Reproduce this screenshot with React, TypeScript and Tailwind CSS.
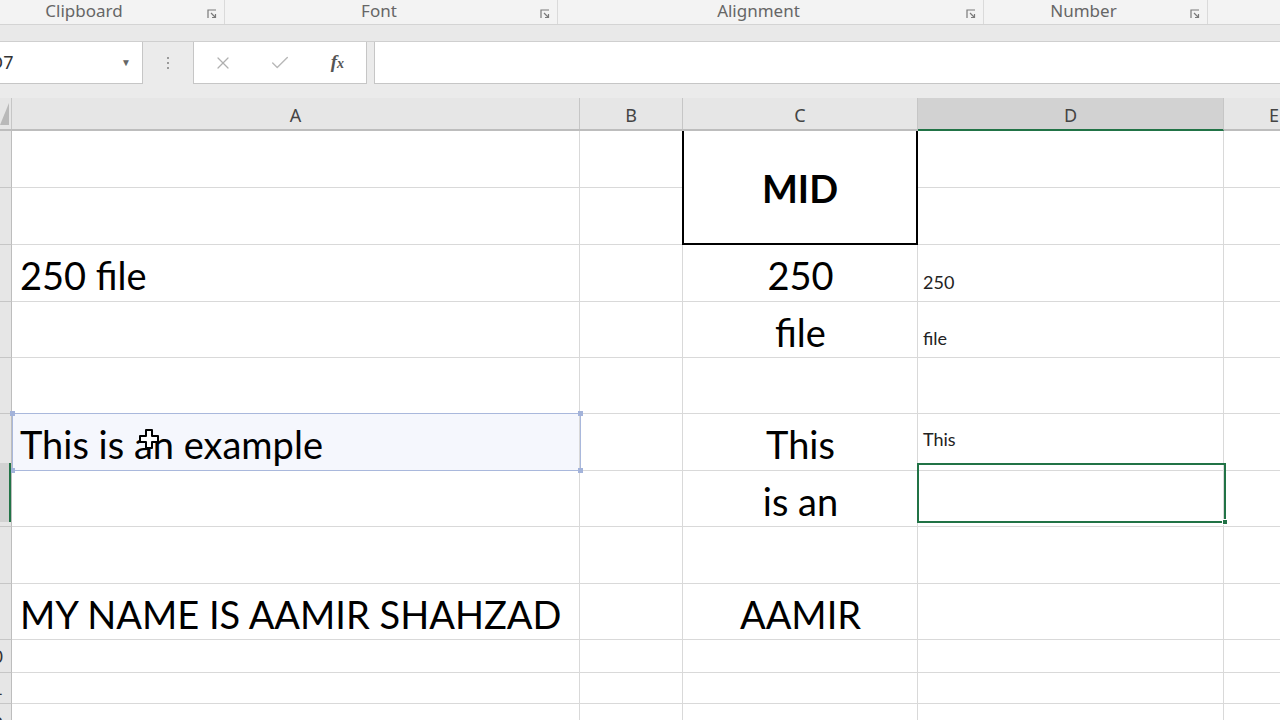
import { Check, X } from "lucide-react";

const GRID = "#d9d9d9";
const big = "text-[38px] leading-none text-black whitespace-nowrap";
const small = "text-[18px] leading-none text-[#222] whitespace-nowrap";

const rowHeights = [57, 57, 57, 56, 56, 57, 56, 57, 56, 33, 31, 40];

/** Small dialog-launcher glyph in the corner of each ribbon group */
function Launcher() {
	return (
		<svg width="10" height="10" viewBox="0 0 10 10" className="text-[#7a7a7a]">
			<path d="M1 9V1h8" fill="none" stroke="currentColor" strokeWidth="1.2" />
			<path d="M4 4l4.5 4.5M8.5 5v3.5H5" fill="none" stroke="currentColor" strokeWidth="1.2" />
		</svg>
	);
}

function RibbonGroup(props: { label: string; width: number; className?: string }) {
	return (
		<div
			className={`flex items-center h-full border-r border-[#dadada] ${props.className ?? ""}`}
			style={{ width: props.width }}
		>
			<div className="flex-1 text-center text-[17px] text-[#666] pb-[2px]">{props.label}</div>
			<div className="w-[24px] flex justify-center pt-[3px]">
				<Launcher />
			</div>
		</div>
	);
}

function MoveCursor() {
	return (
		<svg width="22" height="22" viewBox="0 0 22 22" className="absolute left-[138px] top-[428px]">
			<path
				d="M8 2h6v6h6v6h-6v6H8v-6H2V8h6z"
				fill="white"
				stroke="black"
				strokeWidth="2"
				strokeLinejoin="round"
			/>
		</svg>
	);
}

export default function App() {
	return (
		<div className="relative w-[1280px] h-[720px] overflow-hidden bg-white font-['Lato',sans-serif]">
			{/* Ribbon group labels */}
			<div className="flex h-[25px] bg-[#f3f3f3] border-b border-[#d4d4d4] font-['Noto_Sans',sans-serif]">
				<RibbonGroup label="Clipboard" width={257} className="ml-[-32px]" />
				<RibbonGroup label="Font" width={333} />
				<RibbonGroup label="Alignment" width={426} />
				<RibbonGroup label="Number" width={224} />
			</div>
			<div className="h-[17px] bg-[#e9e9e9] border-b border-[#cfcfcf]" />

			{/* Formula bar */}
			<div className="h-[56px] bg-[#ebebeb]">
				<div className="flex h-[42px]">
					<div className="ml-[-2px] w-[145px] flex items-center bg-white border border-t-0 border-[#c6c6c6] font-['Noto_Sans',sans-serif]">
						<span className="ml-[-9px] text-[18px] text-[#333]">D7</span>
						<span className="ml-auto mr-[11px] text-[10px] text-[#666]">▼</span>
					</div>
					<div className="w-[50px] flex flex-col items-center justify-center gap-[3px]">
						<span className="w-[2px] h-[2px] bg-[#9a9a9a]" />
						<span className="w-[2px] h-[2px] bg-[#9a9a9a]" />
						<span className="w-[2px] h-[2px] bg-[#9a9a9a]" />
					</div>
					<div className="w-[174px] grid grid-cols-3 items-center bg-white border border-t-0 border-[#c6c6c6]">
						<X className="justify-self-center w-[20px] h-[20px] text-[#b0b0b0]" strokeWidth={1.5} />
						<Check className="justify-self-center w-[22px] h-[22px] text-[#b8b8b8]" strokeWidth={1.5} />
						<span className="justify-self-center font-['Liberation_Serif',serif] italic font-bold text-[19px] text-[#555]">
							f<span className="text-[14px]">x</span>
						</span>
					</div>
					<div className="ml-[7px] flex-1 bg-white border-b border-l border-[#c6c6c6]" />
				</div>
			</div>

			{/* Column headers */}
			<div className="grid grid-cols-[12px_568px_103px_235px_306px_100px] h-[33px] bg-[#e6e6e6] border-b-2 border-[#bdbdbd] text-[18px] text-[#444] font-['Noto_Sans',sans-serif]">
				<div className="relative border-r border-[#c6c6c6]">
					<svg width="12" height="24" viewBox="0 0 12 24" className="absolute left-0 top-[5px]">
						<polygon points="9,0 9,22 0,22" fill="#b9b9b9" />
					</svg>
				</div>
				<div className="flex items-center justify-center pt-[3px] border-r border-[#c6c6c6]">A</div>
				<div className="flex items-center justify-center pt-[3px] border-r border-[#c6c6c6]">B</div>
				<div className="flex items-center justify-center pt-[3px] border-r border-[#c6c6c6]">C</div>
				<div className="flex items-center justify-center pt-[3px] bg-[#d2d2d2] border-r border-[#c6c6c6] border-b-2 border-b-[#217346] -mb-[2px]">
					D
				</div>
				<div className="flex items-center justify-center pt-[3px]">E</div>
			</div>

			{/* Sheet */}
			<div
				className="grid grid-cols-[12px_568px_103px_235px_306px_100px]"
				style={{ gridTemplateRows: rowHeights.map((h) => `${h}px`).join(" ") }}
			>
				{rowHeights.map((_, i) => {
					const r = i + 1;
					const num = r >= 10 ? String(r) : "";
					return (
						<div
							key={`h${r}`}
							className="flex items-center justify-end overflow-hidden bg-[#e6e6e6] border-r border-b border-r-[#bdbdbd] border-b-[#c6c6c6] pr-[8px] text-[18px] text-[#333]"
							style={{ gridRow: r, gridColumn: 1 }}
						>
							{num}
						</div>
					);
				})}

				{rowHeights.map((_, i) => {
					const r = i + 1;
					return [2, 3, 5, 6].map((c) => (
						<div
							key={`c${r}-${c}`}
							className={`border-r border-b ${r === 6 && c === 2 ? "bg-[#f5f7fd]" : ""}`}
							style={{ gridRow: r, gridColumn: c, borderColor: GRID }}
						/>
					));
				})}
				{rowHeights.map((_, i) => {
					const r = i + 1;
					if (r <= 2) return null;
					return (
						<div
							key={`cc${r}`}
							className="border-r border-b"
							style={{ gridRow: r, gridColumn: 4, borderColor: GRID }}
						/>
					);
				})}

				{/* MID merged cell */}
				<div className="col-start-4 row-start-1 row-span-2 flex items-center justify-center border-l-2 border-r-2 border-b-2 border-black -ml-[1px] pt-[2px]">
					<span className="text-[38px] leading-none font-bold text-black">MID</span>
				</div>

				{/* Column A texts */}
				<div className="col-start-2 row-start-3 flex items-center pl-[8px] pt-[3px]">
					<span className={big}>250 file</span>
				</div>
				<div className="col-start-2 row-start-6 flex items-center pl-[8px] pt-[3px]">
					<span className={big}>This is an example</span>
				</div>
				<div className="col-start-2 row-start-9 flex items-center pl-[8px] pt-[3px]">
					<span className={big}>MY NAME IS AAMIR SHAHZAD</span>
				</div>

				{/* Column C texts */}
				<div className="col-start-4 row-start-3 flex items-center justify-center pt-[3px]">
					<span className={big}>250</span>
				</div>
				<div className="col-start-4 row-start-4 flex items-center justify-center pt-[3px]">
					<span className={big}>file</span>
				</div>
				<div className="col-start-4 row-start-6 flex items-center justify-center pt-[3px]">
					<span className={big}>This</span>
				</div>
				<div className="col-start-4 row-start-7 flex items-center justify-center pt-[3px]">
					<span className={big}>is an</span>
				</div>
				<div className="col-start-4 row-start-9 flex items-center justify-center pt-[3px]">
					<span className={big}>AAMIR</span>
				</div>

				{/* Column D texts */}
				<div className="col-start-5 row-start-3 flex items-end pl-[5px] pb-[11px]">
					<span className={small}>250</span>
				</div>
				<div className="col-start-5 row-start-4 flex items-end pl-[5px] pb-[11px]">
					<span className={small}>file</span>
				</div>
				<div className="col-start-5 row-start-6 flex items-center pl-[5px] pb-[8px]">
					<span className={small}>This</span>
				</div>
			</div>

			{/* Range selection outline over A6 */}
			<div className="absolute left-[12px] top-[413px] w-[569px] h-[58px] border border-[#a9b8dc]">
				<span className="absolute -left-[3px] -top-[3px] w-[5px] h-[5px] bg-[#a3b3da]" />
				<span className="absolute -right-[3px] -top-[3px] w-[5px] h-[5px] bg-[#a3b3da]" />
				<span className="absolute -left-[3px] -bottom-[3px] w-[5px] h-[5px] bg-[#a3b3da]" />
				<span className="absolute -right-[3px] -bottom-[3px] w-[5px] h-[5px] bg-[#a3b3da]" />
			</div>

			{/* Active row header highlight */}
			<div className="absolute left-0 top-[463px] w-[11px] h-[59px] bg-[#d2d2d2] border-r-2 border-[#217346]" />

			{/* Active cell D7 */}
			<div className="absolute left-[917px] top-[463px] w-[309px] h-[60px] border-2 border-[#217346]">
				<span className="absolute -right-[4px] -bottom-[4px] w-[6px] h-[6px] bg-[#217346] border border-white" />
			</div>

			<MoveCursor />
		</div>
	);
}
